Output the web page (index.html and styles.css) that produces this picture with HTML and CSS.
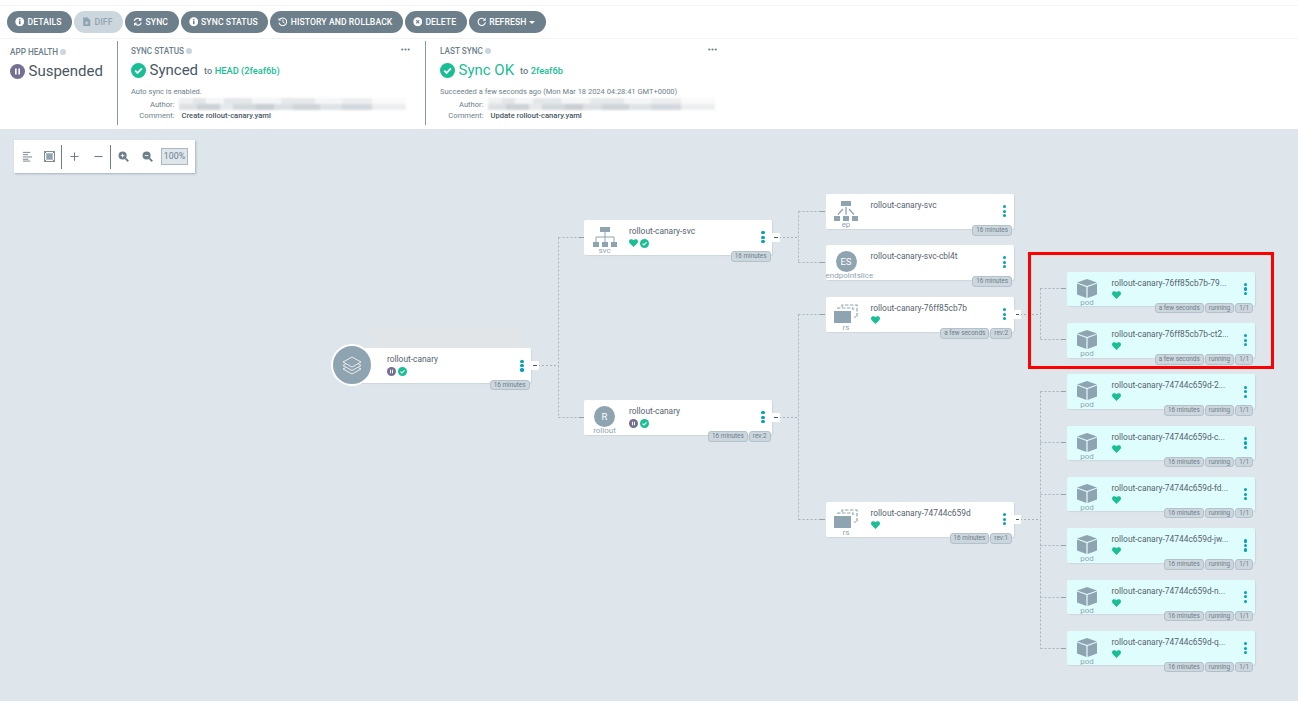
FILE: index.html
```html
<!DOCTYPE html>
<html lang="en">
<head>
<meta charset="utf-8">
<title>rollout-canary</title>
<link rel="stylesheet" href="styles.css">
</head>
<body>
<svg class="defs" width="0" height="0" aria-hidden="true">
  <symbol id="i-info" viewBox="0 0 12 12"><circle cx="6" cy="6" r="5.6" fill="currentColor"/><rect x="5" y="5.1" width="2" height="4" fill="var(--ink,#6d7f8b)"/><rect x="5" y="2.7" width="2" height="1.6" fill="var(--ink,#6d7f8b)"/></symbol>
  <symbol id="i-file" viewBox="0 0 10 12"><path d="M0.5 0.5H6L9.5 4V11.500H0.5Z" fill="currentColor"/><path d="M5 5.500V9.500M3 7.500H7" stroke="#ccd6dd" stroke-width="1.4"/></symbol>
  <symbol id="i-sync" viewBox="0 0 12 12"><path d="M1.600 5A4.500 4.500 0 0 1 9.400 3.200M10.400 7A4.500 4.500 0 0 1 2.600 8.800" fill="none" stroke="currentColor" stroke-width="1.5"/><path d="M10.600 0.600V4.600H6.600ZM1.400 11.400V7.400H5.400Z" fill="currentColor"/></symbol>
  <symbol id="i-history" viewBox="0 0 12 12"><path d="M2 3.200A4.900 4.900 0 1 1 1.200 7" fill="none" stroke="currentColor" stroke-width="1.3"/><path d="M0.600 1V4.400H4Z" fill="currentColor"/><path d="M6.200 3.200V6.300L8.200 7.600" fill="none" stroke="currentColor" stroke-width="1.2"/></symbol>
  <symbol id="i-times" viewBox="0 0 12 12"><circle cx="6" cy="6" r="5.600" fill="currentColor"/><path d="M4 4L8 8M8 4L4 8" stroke="#6d7f8b" stroke-width="1.5"/></symbol>
  <symbol id="i-redo" viewBox="0 0 12 12"><path d="M9.600 3.200A4.600 4.600 0 1 0 10.600 6.600" fill="none" stroke="currentColor" stroke-width="1.4"/><path d="M11 0.800V4.800H7Z" fill="currentColor"/></symbol>
  <symbol id="i-check" viewBox="0 0 14 14"><circle cx="7" cy="7" r="7" fill="#18be94"/><path d="M3.900 7.200L6.100 9.300L10.200 5.100" fill="none" stroke="#fff" stroke-width="1.7"/></symbol>
  <symbol id="i-pause" viewBox="0 0 14 14"><circle cx="7" cy="7" r="7" fill="#766f94"/><path d="M4.700 4.200H6.200V9.800H4.700ZM7.800 4.200H9.300V9.800H7.800Z" fill="#fff"/></symbol>
  <symbol id="i-heart" viewBox="0 0 10 9"><path d="M5 9L0.800 4.800C-0.400 3.500-0.200 1.600 1 0.700 2.200-0.200 3.900 0 5 1.300 6.100 0 7.800-0.200 9 0.700 10.200 1.600 10.400 3.500 9.200 4.800Z" fill="#18be94"/></symbol>
  <symbol id="i-cube" viewBox="0 0 20 19"><path d="M10 0L20 3.400L10 6.900L0 3.400Z M0 4.600L9.400 7.900V19L0 15.600Z M20 4.600L10.600 7.900V19L20 15.600Z" fill="#8fa4b1"/></symbol>
  <symbol id="i-svc" viewBox="0 0 24 20"><path d="M7 0H17V5H7ZM0 15H6V20H0ZM9 15H15V20H9ZM18 15H24V20H18Z" fill="#8fa4b1"/><path d="M12 5V15M3 15V10H21V15" fill="none" stroke="#8fa4b1"/></symbol>
  <symbol id="i-ep" viewBox="0 0 24 20"><path d="M7 0H17V5H7ZM0 15H6V20H0ZM9 15H15V20H9ZM18 15H24V20H18Z" fill="#8fa4b1"/><path d="M12 6V13.500M9 8L4 13.500M15 8L20 13.500" fill="none" stroke="#8fa4b1" stroke-width="1.3"/></symbol>
  <symbol id="i-rs" viewBox="0 0 24 20"><path d="M8 3V1H23V13H20" fill="none" stroke="#8fa4b1" stroke-width="1.2" stroke-dasharray="3.500 1.500"/><path d="M4 5V4H19V6" fill="none" stroke="#8fa4b1" stroke-width="1.2" stroke-dasharray="3.500 1.500"/><path d="M0 7H17V19H0Z" fill="#8fa4b1"/></symbol>
  <symbol id="i-stack" viewBox="0 0 20 19"><path d="M10 1L19 6L10 11L1 6Z M3.500 8.200L1 9.500L10 14.500L19 9.500L16.500 8.200 M3.500 11.700L1 13L10 18L19 13L16.500 11.700" fill="none" stroke="#fff" stroke-width="0.8"/></symbol>
  <symbol id="i-more" viewBox="0 0 9 3"><circle cx="1.300" cy="1.500" r="1.100" fill="#6d7f8b"/><circle cx="4.500" cy="1.500" r="1.100" fill="#6d7f8b"/><circle cx="7.700" cy="1.500" r="1.100" fill="#6d7f8b"/></symbol>
</svg>

<div class="top-strip"></div>

<nav class="toolbar">
  <button class="btn"><svg class="btn-icon"><use href="#i-info"/></svg>DETAILS</button>
  <button class="btn btn-off"><svg class="btn-icon"><use href="#i-file"/></svg>DIFF</button>
  <button class="btn"><svg class="btn-icon"><use href="#i-sync"/></svg>SYNC</button>
  <button class="btn"><svg class="btn-icon"><use href="#i-info"/></svg>SYNC STATUS</button>
  <button class="btn"><svg class="btn-icon"><use href="#i-history"/></svg>HISTORY AND ROLLBACK</button>
  <button class="btn"><svg class="btn-icon"><use href="#i-times"/></svg>DELETE</button>
  <button class="btn"><svg class="btn-icon"><use href="#i-redo"/></svg>REFRESH<span class="caret"></span></button>
</nav>

<section class="summary">
  <div class="panel panel-health">
    <h4 class="panel-label">APP HEALTH<span class="hint"></span></h4>
    <div class="status-line"><svg class="status-icon"><use href="#i-pause"/></svg><span class="status-text">Suspended</span></div>
  </div>
  <div class="panel panel-sync">
    <svg class="panel-more"><use href="#i-more"/></svg>
    <h4 class="panel-label">SYNC STATUS<span class="hint"></span></h4>
    <div class="status-line"><svg class="status-icon"><use href="#i-check"/></svg><span class="status-text">Synced</span><span class="status-to">to <a class="rev">HEAD (2feaf6b)</a></span></div>
    <p class="panel-note">Auto sync is enabled.</p>
    <dl class="meta"><dt>Author:</dt><dd><span class="redacted"></span></dd><dt>Comment:</dt><dd class="strong">Create rollout-canary.yaml</dd></dl>
  </div>
  <div class="panel panel-last">
    <svg class="panel-more"><use href="#i-more"/></svg>
    <h4 class="panel-label">LAST SYNC<span class="hint"></span></h4>
    <div class="status-line"><svg class="status-icon"><use href="#i-check"/></svg><span class="status-text ok">Sync OK</span><span class="status-to">to <a class="rev">2feaf6b</a></span></div>
    <p class="panel-note">Succeeded a few seconds ago (Mon Mar 18 2024 04:28:41 GMT+0000)</p>
    <dl class="meta"><dt>Author:</dt><dd><span class="redacted"></span></dd><dt>Comment:</dt><dd class="strong">Update rollout-canary.yaml</dd></dl>
  </div>
</section>

<main class="canvas">
  <div class="graph-tools">
    <svg class="tool" viewBox="0 0 12 12"><path d="M1 1.500H9M1 4H6.500M1 6.500H11M1 9H7M1 11H9" stroke="#6d7f8b" fill="none"/></svg>
    <svg class="tool tool-near" viewBox="0 0 12 12"><path d="M0.500 0.500H11.500V11.500H0.500Z" fill="none" stroke="#6d7f8b"/><path d="M2.500 2.500H9.500V9.500H2.500Z" fill="#8fa4b1"/><path d="M0.500 0.500L2.500 2.500M11.500 0.500L9.500 2.500M0.500 11.500L2.500 9.500M11.500 11.500L9.500 9.500" stroke="#6d7f8b"/></svg>
    <span class="tool-sep"></span>
    <svg class="tool" viewBox="0 0 12 12"><path d="M6 1.500V10.500M1.500 6H10.500" stroke="#6d7f8b" stroke-width="1.200"/></svg>
    <svg class="tool" viewBox="0 0 12 12"><path d="M1.500 6H10.500" stroke="#6d7f8b" stroke-width="1.200"/></svg>
    <span class="tool-sep"></span>
    <svg class="tool" viewBox="0 0 12 12"><circle cx="5" cy="5" r="4.400" fill="#6d7f8b"/><path d="M8 8L11.200 11.200" stroke="#6d7f8b" stroke-width="2"/><path d="M5 3V7M3 5H7" stroke="#fff"/></svg>
    <svg class="tool" viewBox="0 0 12 12"><circle cx="5" cy="5" r="4.400" fill="#6d7f8b"/><path d="M8 8L11.200 11.200" stroke="#6d7f8b" stroke-width="2"/><path d="M3 5H7" stroke="#fff"/></svg>
    <span class="zoom-level">100%</span>
  </div>

  <svg class="edges" viewBox="0 129 1298 572" width="1298" height="572">
    <g class="edge-lines">
      <path d="M538 365.500H558.500M558.500 237.500V417.500M558.500 237.500H584M558.500 417.500H584"/>
      <path d="M779 237.500H798.500M798.500 211.500V262.500M798.500 211.500H825M798.500 262.500H825"/>
      <path d="M779 417.500H798.500M798.500 314.500V519.500M798.500 314.500H825M798.500 519.500H825"/>
      <path d="M1020 314.500H1040.500M1040.500 288.500V339.500M1040.500 288.500H1066M1040.500 339.500H1066"/>
      <path d="M1020 519.500H1040.500M1040.500 391.500V648.500M1040.500 391.500H1066M1040.500 442.500H1066M1040.500 494.500H1066M1040.500 545.500H1066M1040.500 597.500H1066M1040.500 648.500H1066"/>
    </g>
    <path class="edge-ticks" d="M579 237.500H584M579 417.500H584M820 211.500H825M820 262.500H825M820 314.500H825M820 519.500H825M1061 288.500H1066M1061 339.500H1066M1061 391.500H1066M1061 442.500H1066M1061 494.500H1066M1061 545.500H1066M1061 597.500H1066M1061 648.500H1066"/>
  </svg>

  <div class="ghost"></div>

  <article class="node node-root at-root">
    <div class="root-badge"><svg class="root-stack"><use href="#i-stack"/></svg></div>
    <div class="node-info"><div class="node-title">rollout-canary</div><div class="node-status"><svg class="s-ico"><use href="#i-pause"/></svg><svg class="s-ico"><use href="#i-check"/></svg></div></div>
    <div class="dots"><i></i><i></i><i></i></div>
    <span class="collapse"></span>
    <div class="tags"><span class="tag">16 minutes</span></div>
  </article>

  <article class="node at-svc">
    <div class="kind"><svg class="k-ico"><use href="#i-svc"/></svg><span class="k-label">svc</span></div>
    <div class="node-info"><div class="node-title">rollout-canary-svc</div><div class="node-status"><svg class="s-heart"><use href="#i-heart"/></svg><svg class="s-ico"><use href="#i-check"/></svg></div></div>
    <div class="dots"><i></i><i></i><i></i></div>
    <span class="collapse"></span>
    <div class="tags"><span class="tag">16 minutes</span></div>
  </article>

  <article class="node at-rollout">
    <div class="kind"><span class="k-circle">R</span><span class="k-label">rollout</span></div>
    <div class="node-info"><div class="node-title">rollout-canary</div><div class="node-status"><svg class="s-ico"><use href="#i-pause"/></svg><svg class="s-ico"><use href="#i-check"/></svg></div></div>
    <div class="dots"><i></i><i></i><i></i></div>
    <span class="collapse"></span>
    <div class="tags"><span class="tag">16 minutes</span><span class="tag">rev:2</span></div>
  </article>

  <article class="node at-ep">
    <div class="kind"><svg class="k-ico"><use href="#i-ep"/></svg><span class="k-label">ep</span></div>
    <div class="node-info"><div class="node-title">rollout-canary-svc</div></div>
    <div class="dots"><i></i><i></i><i></i></div>
    <div class="tags"><span class="tag">16 minutes</span></div>
  </article>

  <article class="node at-es">
    <div class="kind"><span class="k-circle">ES</span><span class="k-label">endpointslice</span></div>
    <div class="node-info"><div class="node-title">rollout-canary-svc-cbl4t</div></div>
    <div class="dots"><i></i><i></i><i></i></div>
    <div class="tags"><span class="tag">16 minutes</span></div>
  </article>

  <article class="node at-rs1">
    <div class="kind"><svg class="k-ico"><use href="#i-rs"/></svg><span class="k-label">rs</span></div>
    <div class="node-info"><div class="node-title">rollout-canary-76ff85cb7b</div><div class="node-status"><svg class="s-heart"><use href="#i-heart"/></svg></div></div>
    <div class="dots"><i></i><i></i><i></i></div>
    <span class="collapse"></span>
    <div class="tags"><span class="tag">a few seconds</span><span class="tag">rev:2</span></div>
  </article>

  <article class="node at-rs2">
    <div class="kind"><svg class="k-ico"><use href="#i-rs"/></svg><span class="k-label">rs</span></div>
    <div class="node-info"><div class="node-title">rollout-canary-74744c659d</div><div class="node-status"><svg class="s-heart"><use href="#i-heart"/></svg></div></div>
    <div class="dots"><i></i><i></i><i></i></div>
    <span class="collapse"></span>
    <div class="tags"><span class="tag">16 minutes</span><span class="tag">rev:1</span></div>
  </article>

  <article class="node node-pod at-p1">
    <div class="kind"><svg class="k-cube"><use href="#i-cube"/></svg><span class="k-label">pod</span></div>
    <div class="node-info"><div class="node-title">rollout-canary-76ff85cb7b-79...</div><div class="node-status"><svg class="s-heart"><use href="#i-heart"/></svg></div></div>
    <div class="dots"><i></i><i></i><i></i></div>
    <div class="tags"><span class="tag">a few seconds</span><span class="tag">running</span><span class="tag">1/1</span></div>
  </article>

  <article class="node node-pod at-p2">
    <div class="kind"><svg class="k-cube"><use href="#i-cube"/></svg><span class="k-label">pod</span></div>
    <div class="node-info"><div class="node-title">rollout-canary-76ff85cb7b-ct2...</div><div class="node-status"><svg class="s-heart"><use href="#i-heart"/></svg></div></div>
    <div class="dots"><i></i><i></i><i></i></div>
    <div class="tags"><span class="tag">a few seconds</span><span class="tag">running</span><span class="tag">1/1</span></div>
  </article>

  <article class="node node-pod at-p3">
    <div class="kind"><svg class="k-cube"><use href="#i-cube"/></svg><span class="k-label">pod</span></div>
    <div class="node-info"><div class="node-title">rollout-canary-74744c659d-2...</div><div class="node-status"><svg class="s-heart"><use href="#i-heart"/></svg></div></div>
    <div class="dots"><i></i><i></i><i></i></div>
    <div class="tags"><span class="tag">16 minutes</span><span class="tag">running</span><span class="tag">1/1</span></div>
  </article>

  <article class="node node-pod at-p4">
    <div class="kind"><svg class="k-cube"><use href="#i-cube"/></svg><span class="k-label">pod</span></div>
    <div class="node-info"><div class="node-title">rollout-canary-74744c659d-c...</div><div class="node-status"><svg class="s-heart"><use href="#i-heart"/></svg></div></div>
    <div class="dots"><i></i><i></i><i></i></div>
    <div class="tags"><span class="tag">16 minutes</span><span class="tag">running</span><span class="tag">1/1</span></div>
  </article>

  <article class="node node-pod at-p5">
    <div class="kind"><svg class="k-cube"><use href="#i-cube"/></svg><span class="k-label">pod</span></div>
    <div class="node-info"><div class="node-title">rollout-canary-74744c659d-fd...</div><div class="node-status"><svg class="s-heart"><use href="#i-heart"/></svg></div></div>
    <div class="dots"><i></i><i></i><i></i></div>
    <div class="tags"><span class="tag">16 minutes</span><span class="tag">running</span><span class="tag">1/1</span></div>
  </article>

  <article class="node node-pod at-p6">
    <div class="kind"><svg class="k-cube"><use href="#i-cube"/></svg><span class="k-label">pod</span></div>
    <div class="node-info"><div class="node-title">rollout-canary-74744c659d-jw...</div><div class="node-status"><svg class="s-heart"><use href="#i-heart"/></svg></div></div>
    <div class="dots"><i></i><i></i><i></i></div>
    <div class="tags"><span class="tag">16 minutes</span><span class="tag">running</span><span class="tag">1/1</span></div>
  </article>

  <article class="node node-pod at-p7">
    <div class="kind"><svg class="k-cube"><use href="#i-cube"/></svg><span class="k-label">pod</span></div>
    <div class="node-info"><div class="node-title">rollout-canary-74744c659d-n...</div><div class="node-status"><svg class="s-heart"><use href="#i-heart"/></svg></div></div>
    <div class="dots"><i></i><i></i><i></i></div>
    <div class="tags"><span class="tag">16 minutes</span><span class="tag">running</span><span class="tag">1/1</span></div>
  </article>

  <article class="node node-pod at-p8">
    <div class="kind"><svg class="k-cube"><use href="#i-cube"/></svg><span class="k-label">pod</span></div>
    <div class="node-info"><div class="node-title">rollout-canary-74744c659d-q...</div><div class="node-status"><svg class="s-heart"><use href="#i-heart"/></svg></div></div>
    <div class="dots"><i></i><i></i><i></i></div>
    <div class="tags"><span class="tag">16 minutes</span><span class="tag">running</span><span class="tag">1/1</span></div>
  </article>

  <div class="highlight"></div>
</main>
</body>
</html>
```
FILE: styles.css
```css
* { box-sizing: border-box; }
html, body { margin: 0; padding: 0; height: 701px; overflow: hidden; background: #fff; }
body { font-family: Roboto, "Liberation Sans", sans-serif; color: #495763; }
.defs { position: absolute; }

.top-strip { height: 6px; border-bottom: 1px solid #f3f4f5; }

.toolbar { height: 33px; display: flex; gap: 2px; padding: 4.700px 0 0 7px; border-bottom: 1px solid #f5f6f7; }
.btn {
  --ink: #6d7f8b;
  height: 22.700px; padding: 0 10.500px 0 8px; border: 0; border-radius: 12px;
  background: #6d7f8b; color: #fff;
  font: 500 8.600px/22px Roboto, sans-serif; letter-spacing: 0.100px;
  display: flex; align-items: center; white-space: nowrap;
}
.btn-off { background: #ccd6dd; color: #8fa4b1; }
.btn-icon { width: 9.500px; height: 9.500px; margin-right: 3px; flex: none; }
.caret { width: 0; height: 0; margin-left: 3px; border: 3px solid transparent; border-top-color: #fff; border-bottom: 0; }

.summary { height: 90px; display: flex; background: #fff; box-shadow: 0 1px 2px rgba(109,127,139,.3); position: relative; }
.panel { position: relative; margin-top: 2px; height: 84px; padding-top: 4px; }
.panel-health { width: 117px; padding-left: 10px; padding-top: 5px; }
.panel-sync { width: 308px; padding-left: 13px; border-left: 1px solid #8a9aa5; }
.panel-last { width: 300px; padding-left: 14px; border-left: 1px solid #8a9aa5; }
.panel-label { margin: 0; font: 500 8.200px/12px Roboto, sans-serif; color: #6d7f8b; display: flex; align-items: center; }
.hint { width: 6px; height: 6px; margin-left: 2px; border-radius: 50%; background: #ccd6dd; }
.panel-more { position: absolute; right: 15px; top: 7px; width: 9px; height: 3px; }
.panel-last .panel-more { right: 8px; }
.status-line { height: 20px; margin-top: 3px; display: flex; align-items: center; }
.status-icon { width: 15px; height: 15px; margin-right: 3.500px; flex: none; }
.status-text { font-size: 15px; line-height: 20px; color: #495763; }
.status-text.ok { color: #18be94; }
.status-to { margin-left: 6px; font-size: 9.300px; font-weight: 500; color: #6d7f8b; }
.rev { color: #18be94; font-weight: 500; }
.panel-note { margin: 6px 0 0; font-size: 7.500px; line-height: 11px; color: #6d7f8b; }
.meta { margin: 1.500px 0 0; display: grid; grid-template-columns: 43.500px 1fr; column-gap: 7px; font-size: 7.600px; line-height: 11px; color: #6d7f8b; }
.meta dt { text-align: right; }
.meta dd { margin: 0; }
.meta .strong { font-weight: 500; color: #495763; }
.redacted {
  display: block; width: 227px; height: 12px; margin: -1px 0 0 -3px; filter: blur(1px);
  background:
    linear-gradient(90deg, #eef0f1 0 6%, #e3e6e8 6% 12%, #f4f5f6 12% 20%, #e4e7e9 20% 32%, #f4f5f6 32% 45%, #e6e9eb 45% 60%, #f5f6f7 60% 72%, #eceef0 72% 85%, #fafafa 85% 100%) top / 100% 50% no-repeat,
    linear-gradient(90deg, #dde1e4 0 8%, #cdd2d6 8% 18%, #e6e9eb 18% 24%, #d3d8db 24% 34%, #c9ced3 34% 42%, #dde0e3 42% 50%, #cfd4d8 50% 62%, #dfe3e5 62% 72%, #d4d8dc 72% 85%, #eceef0 85% 100%) bottom / 100% 50% no-repeat;
}

.canvas { position: relative; height: 572px; background: #dee6eb; overflow: hidden; }

.graph-tools {
  position: absolute; left: 14px; top: 11px; width: 181px; height: 33px;
  background: #fff; box-shadow: 1px 1px 2px rgba(109,127,139,.5);
  display: flex; align-items: center; padding-left: 7.500px;
}
.tool { width: 11px; height: 11px; flex: none; }
.tool + .tool { margin-left: 13px; }
.tool + .tool-near { margin-left: 11px; }
.tool-sep { width: 1px; height: 24px; margin: 0 6.500px; background: #6d7f8b; flex: none; }
.zoom-level {
  width: 27px; height: 17px; margin-left: 8.500px;
  border: 1px solid #a9b8c2; background: #dee6eb;
  font-size: 8.800px; line-height: 15px; text-align: center; color: #6d7f8b;
}

.edges { position: absolute; left: 0; top: 0; }
.edge-lines path { fill: none; stroke: #a5b3bd; stroke-width: 1; stroke-dasharray: 2 2; }
.edge-ticks { fill: none; stroke: #94a2ac; stroke-width: 1; }

.ghost { position: absolute; left: 370px; top: 199px; width: 152px; height: 20px; background: #e2e5e8; }

.node {
  position: absolute; width: 188px; height: 34.500px;
  background: #fff; border-radius: 2px; box-shadow: 1px 1px 1px #ccd6dd;
  display: flex;
}
.node-pod { background: #e0fdfd; }
.at-root { left: 352px; top: 219px; width: 179px; height: 35px; }
.at-svc { left: 584px; top: 91px; }
.at-rollout { left: 584px; top: 271px; }
.at-ep { left: 825.500px; top: 65px; }
.at-es { left: 825.500px; top: 116px; }
.at-rs1 { left: 825.500px; top: 168px; }
.at-rs2 { left: 825.500px; top: 373px; }
.at-p1 { left: 1066.500px; top: 142.700px; }
.at-p2 { left: 1066.500px; top: 194px; }
.at-p3 { left: 1066.500px; top: 245.300px; }
.at-p4 { left: 1066.500px; top: 296.600px; }
.at-p5 { left: 1066.500px; top: 347.900px; }
.at-p6 { left: 1066.500px; top: 399.200px; }
.at-p7 { left: 1066.500px; top: 450.500px; }
.at-p8 { left: 1066.500px; top: 501.800px; }

.kind { width: 45px; flex: none; padding-top: 7px; display: flex; flex-direction: column; align-items: center; position: relative; padding-right: 4px; }
.k-ico { width: 24px; height: 20px; }
.k-cube { width: 20px; height: 19px; }
.k-circle { width: 21px; height: 21px; margin-top: -1px; border-radius: 50%; background: #8fa4b1; color: #fff; font-size: 9.500px; line-height: 21px; text-align: center; }
.k-label { position: absolute; top: 26px; left: 0; right: 4px; text-align: center; font-size: 8px; line-height: 10px; color: #8fa4b1; white-space: nowrap; }

.node-info { padding-top: 5px; flex: 1; min-width: 0; }
.node-root .node-info { padding-left: 35px; }
.node-title { font-size: 8.400px; line-height: 12px; color: #55636e; white-space: nowrap; }
.node-status { height: 10px; margin-top: 1px; display: flex; align-items: center; gap: 1.500px; }
.s-ico { width: 9px; height: 9px; }
.s-heart { width: 9px; height: 8px; }

.root-badge {
  position: absolute; left: -21px; top: -4px; width: 42px; height: 42px;
  border-radius: 50%; background: #8fa4b1; border: 2.500px solid #fff;
  display: flex; align-items: center; justify-content: center;
}
.root-stack { width: 20px; height: 19px; }

.dots { position: absolute; right: 7.500px; top: 50%; transform: translateY(-50%); display: flex; flex-direction: column; gap: 1.300px; }
.dots i { display: block; width: 3.200px; height: 3.200px; border-radius: 50%; background: #00a2b3; }

.collapse { position: absolute; left: 100%; top: 13px; width: 7.500px; height: 9px; background: #fff; border-radius: 0 1px 1px 0; }
.collapse::after { content: ""; position: absolute; left: 2px; top: 4px; width: 3.500px; height: 1px; background: #495763; }

.tags { position: absolute; right: 1.500px; bottom: -7px; display: flex; gap: 1px; }
.tag {
  height: 10.500px; padding: 0 3px; border-radius: 3px;
  background: #ccd6dd; border: 1px solid #b4c1cb;
  font-size: 6.400px; line-height: 8.500px; color: #6d7f8b; white-space: nowrap;
}

.highlight { position: absolute; left: 1028px; top: 123px; width: 246px; height: 117px; border: 3px solid #f00; }
```
